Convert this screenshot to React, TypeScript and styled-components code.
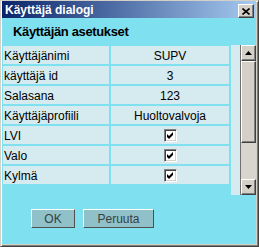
import React from 'react';
import styled, { createGlobalStyle } from 'styled-components';

const Global = createGlobalStyle`
  html, body { margin: 0; padding: 0; background: #ffffff; }
  body { font-family: "Liberation Sans", Arial, sans-serif; }
  * { box-sizing: border-box; }
`;

const Window = styled.div`
  width: 259px;
  height: 247px;
  display: flex;
  flex-direction: column;
  border-top: 1px solid #d4d0c8;
  border-left: 1px solid #d4d0c8;
  border-right: 1px solid #404040;
  border-bottom: 1px solid #404040;
  box-shadow: inset 1px 1px 0 #ffffff, inset -1px -1px 0 #808080;
  padding: 0 2px 2px 1px;
  background: #d4d0c8;
`;

const TitleBar = styled.div`
  height: 17px;
  display: flex;
  align-items: center;
  justify-content: space-between;
  padding: 0 2px 0 3px;
  background: linear-gradient(to right, #0a246a, #a6caf0);
  color: #ffffff;
  font-weight: bold;
  font-size: 12px;
`;

const Bevel = styled.div`
  background: #d4d0c8;
  border-top: 1px solid #ffffff;
  border-left: 1px solid #ffffff;
  border-right: 1px solid #404040;
  border-bottom: 1px solid #404040;
  box-shadow: inset -1px -1px 0 #808080;
  display: flex;
  align-items: center;
  justify-content: center;
`;

const CloseButton = styled(Bevel)`
  width: 16px;
  height: 14px;
  margin-top: 3px;
`;

const Body = styled.div`
  flex: 1;
  display: flex;
  flex-direction: column;
  background: #7fe0f0;
`;

const Header = styled.div`
  height: 27px;
  display: flex;
  align-items: center;
  padding-left: 11px;
  font-weight: bold;
  font-size: 13px;
  letter-spacing: -0.35px;
  color: #000000;
`;

const ScrollArea = styled.div`
  height: 150px;
  margin-left: 1px;
  display: flex;
`;

const Grid = styled.div`
  width: 226px;
  margin-right: 2px;
  padding-top: 1px;
  display: grid;
  grid-template-columns: 106px 118px;
  column-gap: 2px;
  row-gap: 2px;
  align-content: start;
`;

const Cell = styled.div<{ $center?: boolean }>`
  height: 18px;
  background: #d6ebef;
  font-size: 12px;
  color: #000000;
  display: flex;
  align-items: center;
  justify-content: ${(p) => (p.$center ? 'center' : 'flex-start')};
  padding-left: ${(p) => (p.$center ? '0' : '1px')};
  padding-top: 1px;
  white-space: nowrap;
`;

const Strip = styled.div`
  width: 9px;
  background: #d6ebef;
`;

const ScrollBar = styled.div`
  width: 16px;
  border-left: 1px solid #707070;
  display: flex;
  flex-direction: column;
`;

const ArrowButton = styled(Bevel)`
  height: 16px;
`;

const Thumb = styled(Bevel)`
  height: 82px;
`;

const Track = styled.div`
  flex: 1;
  background: #d8d5ce;
`;

const Buttons = styled.div`
  display: flex;
  gap: 8px;
  margin-top: 14px;
  padding-left: 29px;
`;

const Button = styled.button<{ $w: number }>`
  width: ${(p) => p.$w}px;
  height: 19px;
  padding: 0;
  background: #90c0c8;
  border-top: 1px solid #ffffff;
  border-left: 1px solid #ffffff;
  border-right: 1px solid #505050;
  border-bottom: 1px solid #505050;
  font-family: "Liberation Sans", Arial, sans-serif;
  font-size: 12px;
  color: #354045;
`;

const CheckBox = styled.div`
  width: 13px;
  height: 13px;
  background: #ffffff;
  border-top: 1px solid #808080;
  border-left: 1px solid #808080;
  border-right: 1px solid #ffffff;
  border-bottom: 1px solid #ffffff;
  box-shadow: inset 1px 1px 0 #404040, inset -1px -1px 0 #d4d0c8;
  display: flex;
  align-items: center;
  justify-content: center;
`;

const Check = () => (
  <CheckBox>
    <svg width="7" height="7" viewBox="0 0 7 7">
      <path d="M0 2 L2 4 L6 0 L6 3 L2 7 L0 5 Z" fill="#000" />
    </svg>
  </CheckBox>
);

const rows: { label: string; value: string | null }[] = [
  { label: 'Käyttäjänimi', value: 'SUPV' },
  { label: 'käyttäjä id', value: '3' },
  { label: 'Salasana', value: '123' },
  { label: 'Käyttäjäprofiili', value: 'Huoltovalvoja' },
  { label: 'LVI', value: null },
  { label: 'Valo', value: null },
  { label: 'Kylmä', value: null },
];

export default function App() {
  return (
    <>
      <Global />
      <Window>
        <TitleBar>
          <span>Käyttäjä dialogi</span>
          <CloseButton>
            <svg width="8" height="7" viewBox="0 0 8 7">
              <path d="M0.5 0.5 L7.5 6.5 M7.5 0.5 L0.5 6.5" stroke="#000" strokeWidth="1.6" />
            </svg>
          </CloseButton>
        </TitleBar>
        <Body>
          <Header>Käyttäjän asetukset</Header>
          <ScrollArea>
            <Grid>
              {rows.map((r) => (
                <React.Fragment key={r.label}>
                  <Cell>{r.label}</Cell>
                  <Cell $center>{r.value === null ? <Check /> : r.value}</Cell>
                </React.Fragment>
              ))}
            </Grid>
            <Strip />
            <ScrollBar>
              <ArrowButton>
                <svg width="7" height="4" viewBox="0 0 7 4">
                  <path d="M3.5 0 L7 4 L0 4 Z" fill="#000" />
                </svg>
              </ArrowButton>
              <Thumb />
              <Track />
              <ArrowButton>
                <svg width="7" height="4" viewBox="0 0 7 4">
                  <path d="M0 0 L7 0 L3.5 4 Z" fill="#000" />
                </svg>
              </ArrowButton>
            </ScrollBar>
          </ScrollArea>
          <Buttons>
            <Button $w={44}>OK</Button>
            <Button $w={71}>Peruuta</Button>
          </Buttons>
        </Body>
      </Window>
    </>
  );
}
